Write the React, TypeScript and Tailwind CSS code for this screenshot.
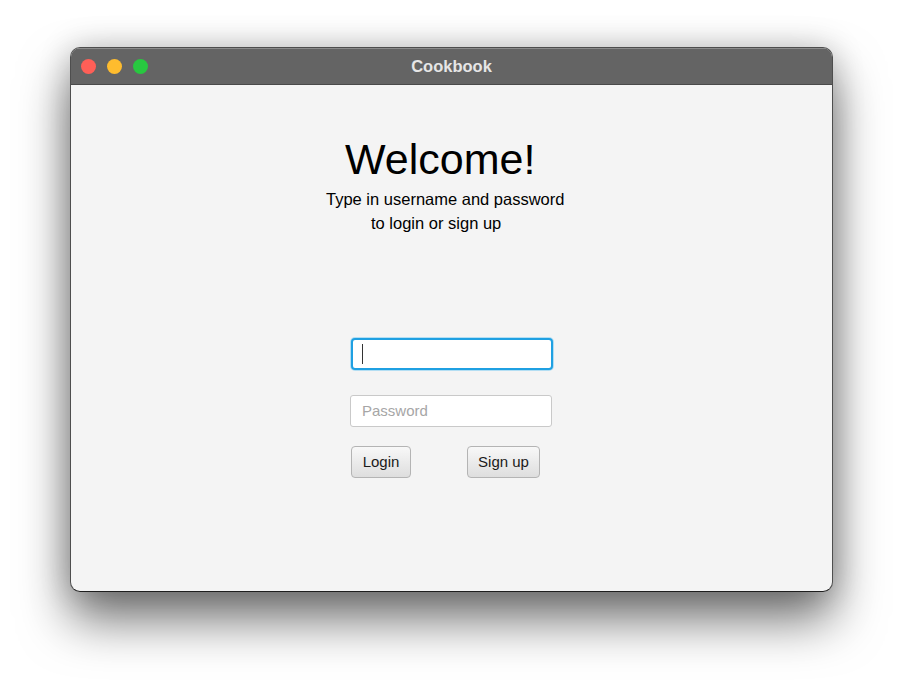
import React from "react";

export default function App() {
  return (
    <div
      className="w-[904px] h-[686px] bg-white pl-[70px] pt-[47px] overflow-hidden"
      style={{ fontFamily: '"Liberation Sans", Arial, sans-serif' }}
    >
      <div className="w-[763px] h-[545px] rounded-[10px] border border-[#4e4e4e] border-b-[#1e1e1e] overflow-hidden bg-[#f4f4f4] flex flex-col shadow-[0_28px_50px_rgba(0,0,0,0.55),0_0_32px_rgba(0,0,0,0.2)]">
        {/* Title bar */}
        <div className="h-[37px] shrink-0 bg-[#646464] border-t border-[#8c8c8c] border-b border-b-[#4a4a4a] flex items-center relative">
          <div className="flex items-center gap-[11px] pl-[10px]">
            <span className="w-[15px] h-[15px] rounded-full bg-[#fe5f57]" />
            <span className="w-[15px] h-[15px] rounded-full bg-[#febc2e]" />
            <span className="w-[15px] h-[15px] rounded-full bg-[#28c840]" />
          </div>
          <div className="absolute inset-0 flex items-center justify-center text-[16.5px] font-bold text-[#e6e6e6]">
            Cookbook
          </div>
        </div>

        {/* Body */}
        <div className="flex-1 flex flex-col items-start pt-[50px]">
          <div className="ml-[274px] text-[43px] leading-[48px] text-black">Welcome!</div>
          <div className="ml-[255px] mt-[4px] text-[16.5px] leading-[24px] text-black">
            Type in username and password
          </div>
          <div className="ml-[300px] text-[16.5px] leading-[24px] text-black">to login or sign up</div>

          <div className="ml-[280px] mt-[103px] w-[202px] h-[32px] rounded-[4px] bg-white border-2 border-[#1fa0e2] shadow-[0_0_0_1px_#b3def3] flex items-center pl-[9px]">
            <span className="w-[1px] h-[20px] bg-[#333]" />
          </div>

          <div className="ml-[279px] mt-[25px] w-[202px] h-[32px] rounded-[3px] bg-white border border-[#c9c9c9] flex items-center pl-[11px] text-[15px] text-[#a6a6a6]">
            Password
          </div>

          <div className="ml-[280px] mt-[19px] flex items-center gap-[56px]">
            <button className="w-[60px] h-[32px] rounded-[4px] border border-[#b4b4b4] bg-gradient-to-b from-[#f8f8f8] to-[#dedede] text-[15px] text-[#1a1a1a] flex items-center justify-center">
              Login
            </button>
            <button className="w-[73px] h-[32px] rounded-[4px] border border-[#b4b4b4] bg-gradient-to-b from-[#f8f8f8] to-[#dedede] text-[15px] text-[#1a1a1a] flex items-center justify-center">
              Sign up
            </button>
          </div>
        </div>
      </div>
    </div>
  );
}
